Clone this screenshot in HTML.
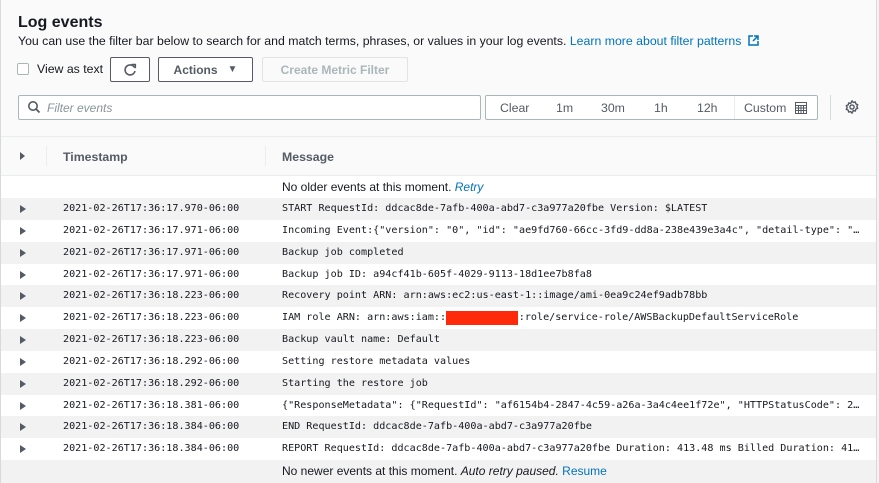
<!DOCTYPE html>
<html><head><style>
*{margin:0;padding:0;box-sizing:border-box}
body{width:879px;height:483px;overflow:hidden;background:#f2f3f3;font-family:"Liberation Sans",sans-serif;color:#16191f;position:relative}
.panel{position:absolute;left:0;top:0;width:877px;height:483px;background:#fafafa;border-right:1px solid #d5dbdb;border-left:1px solid #d5dbdb}
.a{position:absolute;white-space:nowrap}
.btn{position:absolute;border:1px solid #545b64;background:#fff;border-radius:2px;font-size:12px;font-weight:bold;display:flex;align-items:center;justify-content:center;color:#545b64}
.row{position:absolute;left:1px;width:875px;height:22px;font-family:"DejaVu Sans Mono",monospace;font-size:10.1px;color:#16191f;line-height:22px}
.row span{position:absolute;top:0;white-space:nowrap}
.g{background:#f2f2f2}.w{background:#fff}
.tri{position:absolute;left:19px;top:7px;width:0;height:0;border-left:6px solid #545b64;border-top:4px solid transparent;border-bottom:4px solid transparent}
.red{position:absolute;left:164px;top:4px;width:72px;height:14px;background:#fe2a0a}
</style></head><body>
<div class="panel"></div>
<div class="a" style="left:18px;top:14px;font-size:16px;font-weight:bold">Log events</div>
<div class="a" style="left:18px;top:34px;font-size:12.3px">You can use the filter bar below to search for and match terms, phrases, or values in your log events. <span style="color:#0073bb">Learn more about filter patterns</span>
<svg width="11" height="11" viewBox="0 0 11 11" style="vertical-align:-1px;margin-left:3px"><path d="M5 1H1v9h9V6M6 1h4v4M10 1L5 6" fill="none" stroke="#0073bb" stroke-width="1.5"/></svg></div>
<div class="a" style="left:17px;top:63px;width:12px;height:12px;border:1px solid #aab7b8;border-radius:2px;background:#fff"></div>
<div class="a" style="left:37px;top:62px;font-size:12.3px">View as text</div>
<div class="btn" style="left:110px;top:57px;width:40px;height:25px"><svg width="14" height="14" viewBox="0 0 14 14"><path d="M11.5 4.5A5 5 0 1 0 12 8" fill="none" stroke="#545b64" stroke-width="1.6"/><path d="M8.5 1.5h3.8v3.8" fill="none" stroke="#545b64" stroke-width="1.6"/></svg></div>
<div class="btn" style="left:158px;top:57px;width:95px;height:25px;color:#545b64">Actions&nbsp;&nbsp;&nbsp;<span style="font-size:10px">▼</span></div>
<div class="btn" style="left:262px;top:57px;width:146px;height:25px;border-color:#e1e4e4;color:#aab7b8;background:#fafafa">Create Metric Filter</div>
<div class="a" style="left:18px;top:95px;width:463px;height:25px;border:1px solid #aab7b8;background:#fff;border-radius:2px"></div>
<svg class="a" style="left:27px;top:100px" width="14" height="14" viewBox="0 0 14 14"><circle cx="6" cy="6" r="4.2" fill="none" stroke="#545b64" stroke-width="1.6"/><path d="M9 9l3.5 3.5" stroke="#545b64" stroke-width="1.8"/></svg>
<div class="a" style="left:47px;top:101px;font-size:12px;font-style:italic;color:#879596">Filter events</div>
<div class="a" style="left:485px;top:95px;width:333px;height:25px;border:1px solid #aab7b8;background:#fff;border-radius:2px;font-size:12.3px;color:#545b64">
<span class="a" style="left:14px;top:5px">Clear</span><span class="a" style="left:70px;top:5px">1m</span><span class="a" style="left:115px;top:5px">30m</span><span class="a" style="left:168px;top:5px">1h</span><span class="a" style="left:211px;top:5px">12h</span>
<span class="a" style="left:248px;top:0;width:1px;height:23px;background:#eaeded"></span>
<span class="a" style="left:258px;top:5px">Custom</span>
<svg class="a" style="left:309px;top:6px" width="12" height="12" viewBox="0 0 12 12"><rect x="0.5" y="0.5" width="11" height="11" fill="none" stroke="#545b64"/><path d="M0 3.5h12M3.5 3v9M6 3v9M8.5 3v9M0 6h12M0 8.5h12" stroke="#545b64" stroke-width="1"/></svg></div>
<div class="a" style="left:830px;top:95px;width:1px;height:25px;background:#d5dbdb"></div>
<svg class="a" style="left:845px;top:100px" width="14" height="14" viewBox="0 0 14 14"><path d="M7 0.8l1.3 1.6 2-.5.5 2 1.9.8-.9 1.8.9 1.8-1.9.8-.5 2-2-.5L7 13.2 5.7 11.6l-2 .5-.5-2-1.9-.8.9-1.8-.9-1.8 1.9-.8.5-2 2 .5z" fill="none" stroke="#545b64" stroke-width="1.4" stroke-linejoin="round"/><circle cx="7" cy="7" r="2.1" fill="none" stroke="#545b64" stroke-width="1.4"/></svg>
<div class="a" style="left:1px;top:136px;width:875px;height:1px;background:#eaeded"></div>
<div class="a" style="left:1px;top:175px;width:875px;height:1px;background:#eaeded"></div>
<div class="tri" style="top:152px;left:20px;border-left-width:5px;border-top-width:4px;border-bottom-width:4px"></div>
<div class="a" style="left:46px;top:146px;width:1px;height:20px;background:#eaeded"></div>
<div class="a" style="left:265px;top:146px;width:1px;height:20px;background:#eaeded"></div>
<div class="a" style="left:63px;top:150px;font-size:12.3px;font-weight:bold;color:#545b64">Timestamp</div>
<div class="a" style="left:282px;top:150px;font-size:12.3px;font-weight:bold;color:#545b64">Message</div>

<div class="row w" style="top:176px;font-family:'Liberation Sans',sans-serif;font-size:12px"><span style="left:281px">No older events at this moment. <i style="color:#0073bb">Retry</i></span></div>
<div class="row g" style="top:198px"><div class="tri"></div><span style="left:62px">2021-02-26T17:36:17.970-06:00</span><span style="left:281px">START RequestId: ddcac8de-7afb-400a-abd7-c3a977a20fbe Version: $LATEST</span></div>
<div class="row w" style="top:220px"><div class="tri"></div><span style="left:62px">2021-02-26T17:36:17.971-06:00</span><span style="left:281px">Incoming Event:{"version": "0", "id": "ae9fd760-66cc-3fd9-dd8a-238e439e3a4c", "detail-type": "…</span></div>
<div class="row g" style="top:242px"><div class="tri"></div><span style="left:62px">2021-02-26T17:36:17.971-06:00</span><span style="left:281px">Backup job completed</span></div>
<div class="row w" style="top:264px"><div class="tri"></div><span style="left:62px">2021-02-26T17:36:17.971-06:00</span><span style="left:281px">Backup job ID: a94cf41b-605f-4029-9113-18d1ee7b8fa8</span></div>
<div class="row g" style="top:285px"><div class="tri"></div><span style="left:62px">2021-02-26T17:36:18.223-06:00</span><span style="left:281px">Recovery point ARN: arn:aws:ec2:us-east-1::image/ami-0ea9c24ef9adb78bb</span></div>
<div class="row w" style="top:307px"><div class="tri"></div><span style="left:62px">2021-02-26T17:36:18.223-06:00</span><span style="left:281px">IAM role ARN: arn:aws:iam::<span style="position:static;display:inline-block;width:72.7px"></span>:role/service-role/AWSBackupDefaultServiceRole</span><div class="red" style="left:445px"></div></div>
<div class="row g" style="top:329px"><div class="tri"></div><span style="left:62px">2021-02-26T17:36:18.223-06:00</span><span style="left:281px">Backup vault name: Default</span></div>
<div class="row w" style="top:351px"><div class="tri"></div><span style="left:62px">2021-02-26T17:36:18.292-06:00</span><span style="left:281px">Setting restore metadata values</span></div>
<div class="row g" style="top:373px"><div class="tri"></div><span style="left:62px">2021-02-26T17:36:18.292-06:00</span><span style="left:281px">Starting the restore job</span></div>
<div class="row w" style="top:395px"><div class="tri"></div><span style="left:62px">2021-02-26T17:36:18.381-06:00</span><span style="left:281px">{"ResponseMetadata": {"RequestId": "af6154b4-2847-4c59-a26a-3a4c4ee1f72e", "HTTPStatusCode": 2…</span></div>
<div class="row g" style="top:416px"><div class="tri"></div><span style="left:62px">2021-02-26T17:36:18.384-06:00</span><span style="left:281px">END RequestId: ddcac8de-7afb-400a-abd7-c3a977a20fbe</span></div>
<div class="row w" style="top:438px"><div class="tri"></div><span style="left:62px">2021-02-26T17:36:18.384-06:00</span><span style="left:281px">REPORT RequestId: ddcac8de-7afb-400a-abd7-c3a977a20fbe Duration: 413.48 ms Billed Duration: 41…</span></div>
<div class="row g" style="top:460px;height:23px;font-family:'Liberation Sans',sans-serif;font-size:12px"><span style="left:281px">No newer events at this moment. <i>Auto retry paused.</i> <span style="position:static;color:#0073bb">Resume</span></span></div>
</body></html>
